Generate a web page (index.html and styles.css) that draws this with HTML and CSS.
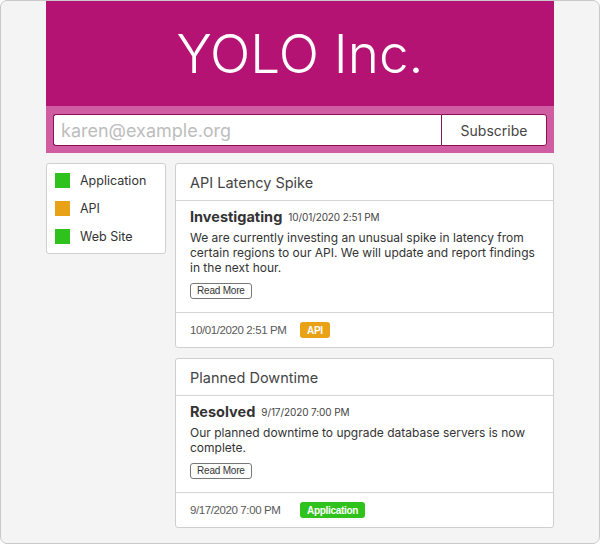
FILE: index.html
```html
<!DOCTYPE html>
<html>
<head>
<meta charset="utf-8">
<link rel="stylesheet" href="styles.css">
</head>
<body>
<div class="frame">
  <div class="page">
    <header class="hero">
      <h1 class="brand">YOLO Inc.</h1>
    </header>
    <form class="subscribe">
      <input class="email" type="text" placeholder="karen@example.org">
      <button class="sub-btn" type="button">Subscribe</button>
    </form>
    <div class="main">
      <aside class="legend">
        <div class="legend-item"><span class="swatch green"></span>Application</div>
        <div class="legend-item"><span class="swatch orange"></span>API</div>
        <div class="legend-item"><span class="swatch green"></span>Web Site</div>
      </aside>
      <section class="incidents">
        <article class="card">
          <div class="card-head">API Latency Spike</div>
          <div class="card-body">
            <div class="status"><span class="status-name">Investigating</span><span class="status-date">10/01/2020 2:51 PM</span></div>
            <p class="desc">We are currently investing an unusual spike in latency from certain regions to our API. We will update and report findings in the next hour.</p>
            <button class="more" type="button">Read More</button>
          </div>
          <div class="card-foot">
            <span class="foot-date">10/01/2020 2:51 PM</span>
            <span class="badge orange">API</span>
          </div>
        </article>
        <article class="card">
          <div class="card-head">Planned Downtime</div>
          <div class="card-body">
            <div class="status"><span class="status-name">Resolved</span><span class="status-date">9/17/2020 7:00 PM</span></div>
            <p class="desc">Our planned downtime to upgrade database servers is now complete.</p>
            <button class="more" type="button">Read More</button>
          </div>
          <div class="card-foot">
            <span class="foot-date">9/17/2020 7:00 PM</span>
            <span class="badge green">Application</span>
          </div>
        </article>
      </section>
    </div>
  </div>
</div>
</body>
</html>
```
FILE: styles.css
```css
* { box-sizing: border-box; }
html, body { margin: 0; padding: 0; }
body {
  font-family: "Inter", "Liberation Sans", sans-serif;
  color: #333;
  background: #fff;
}
.frame {
  width: 600px;
  height: 544px;
  border: 1px solid #c9c9c9;
  border-radius: 7px;
  background: #f4f4f4;
  overflow: hidden;
}
.page {
  width: 508px;
  margin: 0 auto;
}
.hero {
  height: 105px;
  background: #b51373;
  display: flex;
  align-items: center;
  justify-content: center;
}
.brand {
  margin: 0;
  color: #fff;
  font-weight: 300;
  font-size: 53px;
  letter-spacing: 0;
  line-height: 1;
  padding-top: 2px;
}
.subscribe {
  margin: 0;
  height: 47px;
  background: #d05ca2;
  padding: 8px 7px 7px;
  display: flex;
}
.email {
  flex: 1;
  height: 32px;
  border: 1px solid #8b0e58;
  border-right: none;
  border-radius: 3px 0 0 3px;
  padding: 0 7px;
  font-family: inherit;
  font-size: 18px;
  color: #333;
  outline: none;
}
.email::placeholder { color: #bdbdbd; }
.sub-btn {
  width: 106px;
  height: 32px;
  border: 1px solid #8b0e58;
  border-radius: 0 3px 3px 0;
  background: #fff;
  font-family: inherit;
  font-size: 14px;
  color: #444;
  padding: 0;
}
.main {
  display: flex;
  align-items: flex-start;
  gap: 9px;
  margin-top: 10px;
}
.legend {
  width: 120px;
  flex: none;
  background: #fff;
  border: 1px solid #cfcfcf;
  border-radius: 3px;
  padding: 2px 8px 3px;
}
.legend-item {
  height: 28px;
  display: flex;
  align-items: center;
  gap: 10px;
  font-size: 12.5px;
  color: #333;
}
.swatch {
  width: 15px;
  height: 15px;
  flex: none;
}
.swatch.green { background: #2fc21c; }
.swatch.orange { background: #e9a116; }
.incidents {
  flex: 1;
  display: flex;
  flex-direction: column;
  gap: 10px;
}
.card {
  background: #fff;
  border: 1px solid #cfcfcf;
  border-radius: 3px;
}
.card-head {
  height: 37px;
  border-bottom: 1px solid #d4d4d4;
  padding: 0 14px;
  display: flex;
  align-items: center;
  font-size: 14.5px;
  color: #444;
}
.card-body {
  padding: 5px 14px 13px;
  border-bottom: 1px solid #d4d4d4;
}
.status {
  height: 20px;
  display: flex;
  align-items: center;
  gap: 6px;
}
.status-name {
  font-weight: 700;
  font-size: 14.5px;
  color: #333;
}
.status-date {
  font-size: 10px;
  letter-spacing: -0.1px;
  color: #444;
  padding-top: 2px;
}
.desc {
  margin: 4px 0 8px;
  font-size: 12px;
  line-height: 15px;
  color: #333;
}
.more {
  display: block;
  height: 16px;
  padding: 0 6px;
  border: 1px solid #777;
  border-radius: 3px;
  background: #fff;
  font-family: "Liberation Sans", sans-serif;
  font-size: 10px;
  letter-spacing: -0.2px;
  color: #333;
  line-height: 14px;
}
.card-foot {
  height: 34px;
  padding: 0 14px;
  display: flex;
  align-items: center;
}
.foot-date {
  width: 110px;
  flex: none;
  font-family: "Liberation Sans", sans-serif;
  font-size: 11.5px;
  letter-spacing: -0.4px;
  color: #5a5a5a;
}
.badge {
  height: 16px;
  padding: 0 7px;
  border-radius: 3px;
  color: #fff;
  font-family: "Liberation Sans", sans-serif;
  font-size: 10px;
  font-weight: 700;
  letter-spacing: -0.3px;
  display: flex;
  align-items: center;
}
.badge.orange { background: #e9a116; }
.badge.green { background: #2fc21c; }
```
